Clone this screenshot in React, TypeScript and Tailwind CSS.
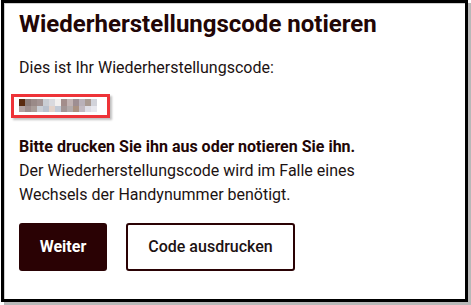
const mosaic = [
  ['#5a2a10', '#8c7c7a', '#9a8a88', '#a39392', '#c9cdd3', '#d9d9de', '#f2efee', '#a38d8b', '#c2b3b3', '#9e8e92', '#b9b1b9', '#a99a92', '#d2d3da'],
  ['#b2a2a2', '#9e8e8e', '#aa9e9a', '#cacfd6', '#bac2ce', '#e2d2ca', '#c2cad6', '#a39696', '#b2aaaa', '#aa9282', '#c2bac2', '#dedee6', '#e8e8ee'],
]

export default function App() {
  return (
    <div className="w-[471px] h-[305px] bg-white font-['Roboto',sans-serif] text-[#1c1212]">
      <div className="ml-px w-[467px] h-[302px] border-[3px] border-black shadow-[3px_3px_0_#b8b8b8,inset_1px_1px_0_#cfcfcf] px-[15px] pt-[5px]">
        <h1 className="text-[24px] leading-[32px] font-bold text-[#220606]">
          Wiederherstellungscode notieren
        </h1>
        <p className="mt-4 text-[16px] leading-[24px]">Dies ist Ihr Wiederherstellungscode:</p>

        <div className="relative mt-[19px] w-fit">
          <div className="flex flex-col">
            {mosaic.map((row, i) => (
              <div key={i} className="flex">
                {row.map((c, j) => (
                  <div key={j} className="w-[6px] h-[6.5px]" style={{ backgroundColor: c }} />
                ))}
              </div>
            ))}
          </div>
          <div className="absolute left-[-8px] top-[-5px] w-[99px] h-[24px] border-[3px] border-[#ee3338] shadow-[2px_2px_2px_rgba(0,0,0,0.25)]" />
        </div>

        <p className="mt-[23px] text-[16px] leading-[24px] font-bold text-[#220606]">
          Bitte drucken Sie ihn aus oder notieren Sie ihn.
        </p>
        <p className="text-[16px] leading-[24px]">
          Der Wiederherstellungscode wird im Falle eines
          <br />
          Wechsels der Handynummer benötigt.
        </p>

        <div className="mt-4 flex gap-[19px]">
          <button className="w-[88px] h-12 rounded-[3px] bg-[#2a0204] text-white text-[16px] font-bold">
            Weiter
          </button>
          <button className="w-[169px] h-12 rounded-[3px] border-2 border-[#2a0204] bg-white text-[16px] font-medium text-[#1c1212]">
            Code ausdrucken
          </button>
        </div>
      </div>
    </div>
  )
}
